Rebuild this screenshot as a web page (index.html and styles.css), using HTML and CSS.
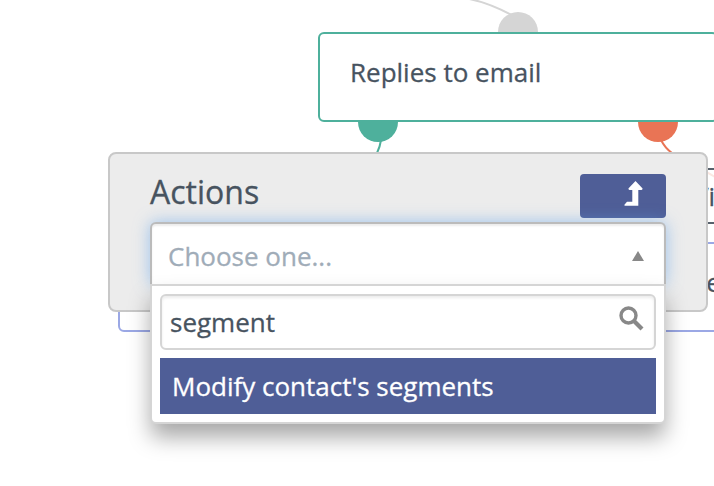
FILE: index.html
```html
<!DOCTYPE html>
<html lang="en">
<head>
<meta charset="utf-8">
<title>Campaign builder</title>
<link rel="stylesheet" href="styles.css">
</head>
<body>
<main class="canvas">
  <svg class="connectors" width="714" height="486" viewBox="0 0 714 486" fill="none" stroke-width="2">
    <path d="M464 -2Q489 2 515 17" stroke="#d5d5d5"/>
    <circle cx="518" cy="32" r="20" fill="#d5d5d5"/>
    <circle cx="378" cy="122" r="20" fill="#4eb09c"/>
    <path d="M381 140Q380 147 377 153" stroke="#4eb09c"/>
    <circle cx="658" cy="122" r="20" fill="#e97455"/>
    <path d="M661 140Q665 148 672 153" stroke="#e97455"/>
    <path d="M704 171Q709 173 715 177" stroke="#fbe8e2"/>
  </svg>
  <div class="node node-decision">Replies to email</div>
  <div class="node node-condition">Visits</div>
  <div class="node node-action">Send</div>

  <section class="panel">
    <header class="panel-head">
      <h1>Actions</h1>
      <button class="back" aria-label="Back">
        <svg width="20" height="26" viewBox="0 0 20 26" fill="#fff"><path d="M11.5 0L18.6 7.6Q18.6 9 17.5 9H14.3V24.8H0.8L0.2 24L3 20.8H8.3V9H5.5Q4.4 9 4.4 7.6Z"/></svg>
      </button>
    </header>
    <div class="chooser">
      <div class="selected"><span>Choose one...</span><svg width="12" height="10" viewBox="0 0 12 10"><path d="M6 0L12 10H0Z" fill="#888"/></svg></div>
      <div class="drop">
        <div class="search"><span>segment</span>
          <svg width="26" height="26" viewBox="0 0 26 26" fill="none" stroke="#888"><circle cx="9.5" cy="9.5" r="7.5" stroke-width="3.4"/><path d="M15 15L23 23" stroke-width="4.2"/></svg>
        </div>
        <div class="option">Modify contact's segments</div>
      </div>
    </div>
  </section>
</main>
</body>
</html>
```

FILE: styles.css
```css
* { box-sizing: border-box; }
body {
  margin: 0;
  background: #fff;
  color: #47535f;
  font: 26px/36px "Open Sans", sans-serif;
  -webkit-text-stroke: .3px;
}
.canvas { position: relative; width: 714px; height: 486px; overflow: hidden; }
.connectors { position: absolute; left: 0; top: 0; }
.node { position: absolute; background: #fff; border: 2px solid; border-radius: 6px; white-space: nowrap; }
.node-decision {
  left: 318px; top: 32px; width: 400px; height: 90px;
  padding: 20px 30px;
  border-color: #4eb09c;
}
.node-condition {
  left: 658px; top: 168px; width: 120px; height: 56px;
  padding: 8px 33px;
  border-color: #57616c;
  background: transparent;
}
.node-action {
  left: 118px; top: 242px; width: 640px; height: 90px;
  padding: 20px 0 0 572px;
  border-color: #9ba8e5;
}
.panel {
  position: absolute; left: 108px; top: 152px; width: 600px; height: 160px;
  padding: 20px 40px;
  background: #ececec;
  border: 2px solid #c8c8c8;
  border-radius: 8px;
}
.panel-head { display: flex; justify-content: space-between; height: 48px; }
h1 { margin: 0; font-size: 32px; line-height: 36px; font-weight: 400; }
.back {
  display: flex; align-items: flex-start; justify-content: flex-end;
  width: 86px; height: 44px; padding: 7px 22px 0 0;
  border: 0; border-radius: 4px;
  background: #4f5e97;
}
.chooser { position: relative; width: 516px; border-radius: 6px; }
.selected {
  display: flex; align-items: center; justify-content: space-between;
  height: 62px; padding: 3px 20px 0 16px;
  border: 2px solid #bbb; border-bottom: 0;
  border-radius: 6px 6px 0 0;
  background: #fff;
  box-shadow: inset 0 2px 2px rgba(0, 0, 0, .08), 0 0 16px rgba(102, 165, 235, .6);
  color: #a0acb8;
}
.drop {
  position: relative;
  display: flex; flex-direction: column; gap: 8px;
  height: 140px; padding: 8px;
  border: 2px solid #d5d5d5;
  border-radius: 0 0 6px 6px;
  background: #fff;
  box-shadow: 0 14px 22px -1px rgba(0, 0, 0, .35);
}
.search {
  display: flex; justify-content: space-between;
  height: 56px; padding: 8px 9px 0 8px;
  border: 2px solid #d5d5d5; border-radius: 6px;
  box-shadow: inset 0 2px 3px rgba(0, 0, 0, .08);
}
.search svg { margin-top: 2px; }
.option { height: 56px; padding: 10px 12px; background: #4f5e97; color: #fff; }
```
